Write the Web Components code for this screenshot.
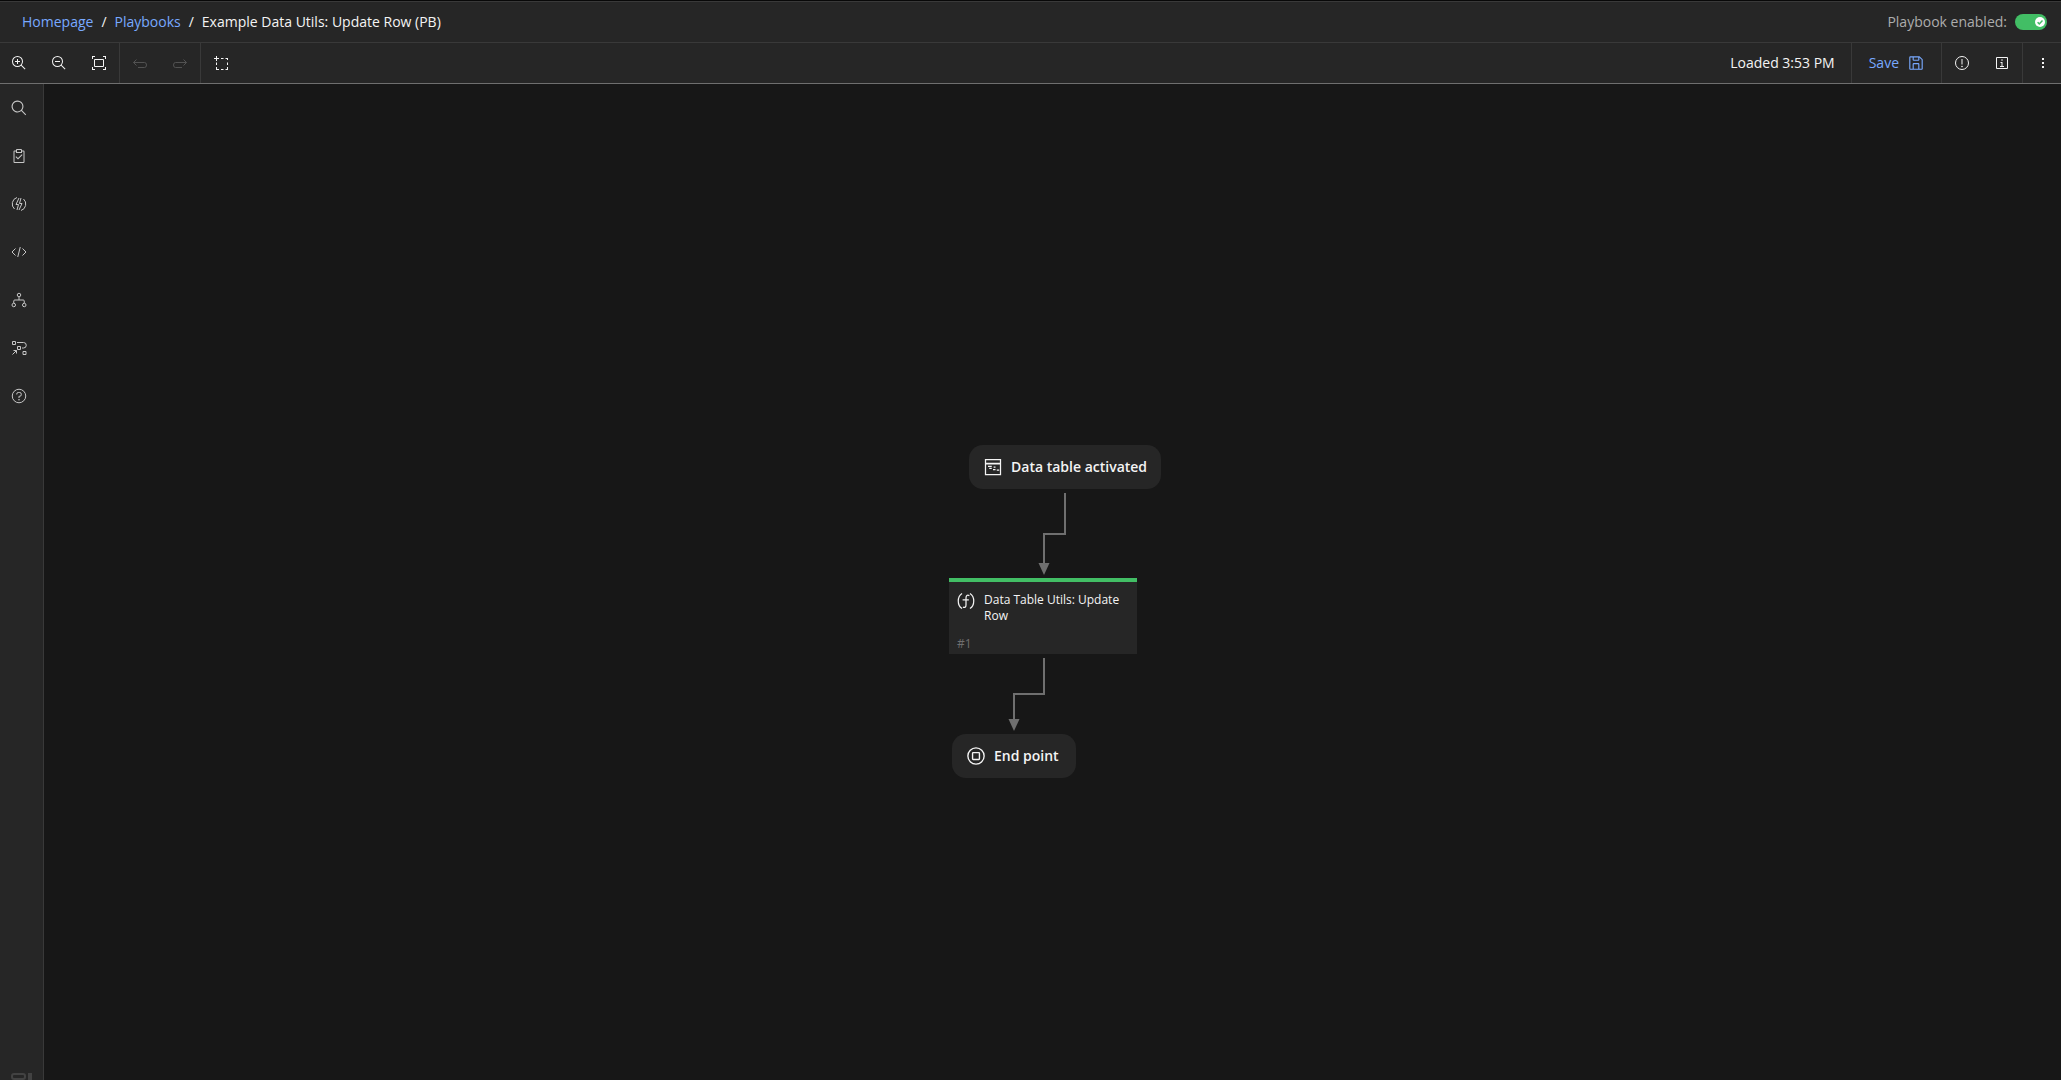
<!DOCTYPE html>
<html lang="en">
<head>
<meta charset="utf-8">
<title>Playbook designer</title>
<style>
html, body { margin: 0; height: 100%; }
body {
  --layer: #262626; --canvas: #171717; --line: #393939; --edge: #6f6f6f;
  --text: #f4f4f4; --muted: #adadad; --link: #78a9ff; --green: #42be65;
  background: #171717; color: var(--text);
  font: 14px/20px "Open Sans", "Noto Sans", sans-serif;
}
</style>
</head>
<body>
<script>
const ICONS = {
  zoomIn: '<path d="M18 12h-4V8h-2v4H8v2h4v4h2v-4h4z"/><path d="M21.4 20A10.9 10.9 0 0 0 24 13 11 11 0 1 0 13 24a10.9 10.9 0 0 0 7-2.6L27.6 29 29 27.6zM13 22a9 9 0 1 1 9-9 9 9 0 0 1-9 9z"/>',
  zoomOut: '<path d="M8 12h10v2H8z"/><path d="M21.4 20A10.9 10.9 0 0 0 24 13 11 11 0 1 0 13 24a10.9 10.9 0 0 0 7-2.6L27.6 29 29 27.6zM13 22a9 9 0 1 1 9-9 9 9 0 0 1-9 9z"/>',
  fit: '<path d="M8 2H2v6h2V4h4zM24 2h6v6h-2V4h-4zM8 30H2v-6h2v4h4zM24 30h6v-6h-2v4h-4zM24 24H8a2 2 0 0 1-2-2V10a2 2 0 0 1 2-2h16a2 2 0 0 1 2 2v12a2 2 0 0 1-2 2zM8 10v12h16V10z"/>',
  undo: '<path class="s" d="M9 9l-6 6 6 6M3 15h22q4 0 4 5t-4 5H12"/>',
  redo: '<path class="s" d="M23 9l6 6-6 6M29 15H7q-4 0-4 5t4 5h13"/>',
  select: '<path d="M0 6h10v2H0zM4 2h2v10H4zM14 6h5v2h-5zM23 6h5v4h-2V8h-3zM4 15h2v5H4zM4 24h2v4h4v2H4zM14 28h5v2h-5zM23 28h3v-4h2v6h-5zM26 15h2v5h-2z"/>',
  save: '<path d="M27.7 9.3l-5-5A1 1 0 0 0 22 4H6a2 2 0 0 0-2 2v20a2 2 0 0 0 2 2h20a2 2 0 0 0 2-2V10a1 1 0 0 0-.3-.7zM12 6h8v4h-8zm8 20h-8v-8h8zm2 0v-8a2 2 0 0 0-2-2h-8a2 2 0 0 0-2 2v8H6V6h4v4a2 2 0 0 0 2 2h8a2 2 0 0 0 2-2V6.4l4 4V26z"/>',
  warning: '<circle class="s" cx="16" cy="16" r="13"/><path d="M15 8h2v11h-2z"/><circle cx="16" cy="23" r="1.6"/>',
  info: '<path d="M26 28H6a2 2 0 0 1-2-2V6a2 2 0 0 1 2-2h20a2 2 0 0 1 2 2v20a2 2 0 0 1-2 2zM6 6v20h20V6z"/><path d="M17 22v-8h-4v2h2v6h-3v2h8v-2z"/><circle cx="16" cy="10" r="1.6"/>',
  more: '<path d="M14 6h4v4h-4zM14 14h4v4h-4zM14 22h4v4h-4z"/>',
  search: '<path d="M29 27.6l-7.6-7.6a11 11 0 1 0-1.4 1.4l7.6 7.6zM4 13a9 9 0 1 1 9 9 9 9 0 0 1-9-9z" transform="translate(-1 -1) scale(1.08)"/>',
  task: '<path d="M14 20.2l-3.6-3.6L9 18l5 5 9-9-1.4-1.4z"/><path d="M25 5h-3V4a2 2 0 0 0-2-2h-8a2 2 0 0 0-2 2v1H7a2 2 0 0 0-2 2v21a2 2 0 0 0 2 2h18a2 2 0 0 0 2-2V7a2 2 0 0 0-2-2zM12 4h8v4h-8zm13 24H7V7h3v3h12V7h3z"/>',
  bolt: '<path class="s" d="M12 3A13.500 13.500 0 0 0 7 26M20 29A13.500 13.500 0 0 0 25 6M16 4l-6 13h5l-3 11M20 4l-3 11h5l-6 13"/>',
  code: '<path class="s" d="M9 9l-7 7 7 7M23 9l7 7-7 7M18.500 6l-5 20"/>',
  tree: '<circle class="s" cx="16" cy="6" r="3.500"/><circle class="s" cx="5.500" cy="26" r="3.500"/><circle class="s" cx="26.500" cy="26" r="3.500"/><path class="s" d="M16 10v6M5.500 22v-4q0-2 2-2h17q2 0 2 2v4"/>',
  flow: '<path class="s" d="M3 3h6v6H3zM13 13h6v6h-6zM24 23h6v6h-6zM12 5h13a5 5 0 0 1 0 11h-3M3 29l8-8M5 21h6v6"/>',
  help: '<circle class="s" cx="16" cy="16" r="13.500"/><path class="s" d="M11.500 13v-1q0-3 3-3h3q3 0 3 3v1.500q0 3-3 3H16V20"/><circle cx="16" cy="23.500" r="1.600"/>',
  table: '<path d="M3 3h26v26H3zM5 5v4h22V5zM5 12v15h22V12z" fill-rule="evenodd"/><path d="M8 14h6v2H8zM10 17h4v2h-4zM17 15h3v2h-3zM16 19h4v2h-4zM22 20h4v2h-4z"/>',
  func: '<path class="s w" d="M9 2.500C0 8 0 24 9 29.500M23 2.500c9 5.500 9 21.500 0 27M22 6.500c-4-2-6 0-6 4V23c0 4-2 5-5.500 4M10 14h11"/>',
  end: '<circle class="s w" cx="16" cy="16" r="13"/><rect class="s w" x="10.500" y="10.500" width="11" height="11" rx="1"/>'
};

class PbIcon extends HTMLElement {
  connectedCallback() {
    this.attachShadow({ mode: 'open' }).innerHTML = `
      <style>
        :host { display: block; flex: none; width: var(--icon-size, 16px); height: var(--icon-size, 16px); }
        svg { display: block; width: 100%; height: 100%; fill: currentColor; }
        .s { fill: none; stroke: currentColor; stroke-width: 2; }
        .w { stroke-width: 2.2; }
      </style>
      <svg viewBox="0 0 32 32" aria-hidden="true">${ICONS[this.getAttribute('name')]}</svg>`;
  }
}

class PbIconButton extends HTMLElement {
  connectedCallback() {
    const off = this.hasAttribute('disabled') ? 'disabled' : '';
    this.attachShadow({ mode: 'open' }).innerHTML = `
      <style>
        :host { display: block; flex: none; width: 40px; height: 40px; }
        button { box-sizing: border-box; width: 100%; height: 100%; margin: 0; padding: 0; border: 0; background: none;
          color: inherit; display: flex; align-items: center; justify-content: center; cursor: pointer; }
        button:disabled { color: #525252; cursor: default; }
      </style>
      <button type="button" aria-label="${this.getAttribute('label')}" ${off}><pb-icon name="${this.getAttribute('icon')}"></pb-icon></button>`;
  }
}

class PbSwitch extends HTMLElement {
  connectedCallback() {
    this.attachShadow({ mode: 'open' }).innerHTML = `
      <style>
        :host { display: flex; align-items: center; gap: 8px; color: var(--muted); }
        .track { display: grid; width: 32px; height: 16px; }
        input, svg { grid-area: 1 / 1; margin: 0; }
        input { appearance: none; width: 32px; height: 16px; border-radius: 8px; background: var(--edge); cursor: pointer; }
        input:checked { background: var(--green); }
        svg { width: 10px; height: 10px; place-self: center end; margin-right: 2px; pointer-events: none; z-index: 1; }
      </style>
      <label for="toggle"><slot></slot></label>
      <span class="track">
        <input id="toggle" type="checkbox" role="switch" checked>
        <svg viewBox="0 0 10 10" aria-hidden="true"><circle cx="5" cy="5" r="5" fill="#fff"/><path d="M2.600 5.200l1.700 1.700 3.200-3.400" fill="none" stroke="#42be65" stroke-width="1.500"/></svg>
      </span>`;
  }
}

class PbHeader extends HTMLElement {
  connectedCallback() {
    this.attachShadow({ mode: 'open' }).innerHTML = `
      <style>
        :host { display: block; border-top: 1px solid #080808; }
        header { display: flex; align-items: center; justify-content: space-between; height: 40px; padding: 0 14px 0 22px;
          background: var(--layer); border-top: 1px solid var(--line); border-bottom: 1px solid var(--line); }
        nav { display: flex; gap: 8px; }
        a { color: var(--link); text-decoration: none; }
      </style>
      <header>
        <nav aria-label="Breadcrumb"><a href="#home">Homepage</a><span>/</span><a href="#playbooks">Playbooks</a><span>/</span><span>Example Data Utils: Update Row (PB)</span></nav>
        <pb-switch>Playbook enabled:</pb-switch>
      </header>`;
  }
}

class PbToolbar extends HTMLElement {
  connectedCallback() {
    this.attachShadow({ mode: 'open' }).innerHTML = `
      <style>
        :host { display: flex; height: 40px; background: var(--layer); border-bottom: 1px solid var(--edge); }
        .group { display: flex; align-items: center; }
        .group + .group { border-left: 1px solid var(--line); }
        .first { width: 119px; justify-content: flex-end; }
        .area pb-icon-button { width: 42px; }
        .spacer { flex: 1; }
        .status { padding: 0 16px; }
        .save { display: flex; align-items: center; gap: 8px; height: 40px; padding: 0 16px 0 17px; border: 0; background: none;
          color: var(--link); font: inherit; cursor: pointer; --icon-size: 18px; }
        .last { width: 38px; justify-content: flex-start; }
      </style>
      <div class="group first">
        <pb-icon-button icon="zoomIn" label="Zoom in"></pb-icon-button>
        <pb-icon-button icon="zoomOut" label="Zoom out"></pb-icon-button>
        <pb-icon-button icon="fit" label="Zoom to fit"></pb-icon-button>
      </div>
      <div class="group">
        <pb-icon-button icon="undo" label="Undo" disabled></pb-icon-button>
        <pb-icon-button icon="redo" label="Redo" disabled></pb-icon-button>
      </div>
      <div class="group area"><pb-icon-button icon="select" label="Select area"></pb-icon-button></div>
      <div class="spacer"></div>
      <div class="group status">Loaded 3:53 PM</div>
      <div class="group"><button class="save" type="button">Save<pb-icon name="save"></pb-icon></button></div>
      <div class="group">
        <pb-icon-button icon="warning" label="Issues"></pb-icon-button>
        <pb-icon-button icon="info" label="Details"></pb-icon-button>
      </div>
      <div class="group last"><pb-icon-button icon="more" label="More options"></pb-icon-button></div>`;
  }
}

class PbSidebar extends HTMLElement {
  connectedCallback() {
    const items = [['search', 'Search'], ['task', 'Tasks'], ['bolt', 'Functions'], ['code', 'Scripts'],
      ['tree', 'Sub-playbooks'], ['flow', 'Decision points'], ['help', 'Help']];
    this.attachShadow({ mode: 'open' }).innerHTML = `
      <style>
        :host { display: flex; flex-direction: column; justify-content: space-between; box-sizing: border-box; width: 44px;
          min-height: 0; background: var(--layer); border-right: 1px solid var(--line); color: #c6c6c6; }
        nav { display: flex; flex-direction: column; gap: 8px; padding: 4px 5px 0 0; }
        nav pb-icon-button { width: 38px; }
        .foot { display: flex; gap: 2px; height: 7px; padding-left: 11px; overflow: hidden; color: #424242; }
        .foot i { width: 4px; background: currentColor; }
      </style>
      <nav aria-label="Elements">${items.map(([i, l]) => `<pb-icon-button icon="${i}" label="${l}"></pb-icon-button>`).join('')}</nav>
      <div class="foot"><svg width="15" height="16" viewBox="0 0 15 16" aria-hidden="true"><rect x="1" y="1" width="13" height="5" rx="2" fill="none" stroke="currentColor" stroke-width="2"/></svg><i></i></div>`;
  }
}

class PbPoint extends HTMLElement {
  connectedCallback() {
    this.attachShadow({ mode: 'open' }).innerHTML = `
      <style>
        :host { display: flex; align-items: center; gap: 8px; box-sizing: border-box; height: 44px; min-width: 124px;
          padding: 0 14px; border-radius: 14px; background: var(--layer); font-weight: 600; white-space: nowrap; --icon-size: 20px; }
      </style>
      <pb-icon name="${this.getAttribute('icon')}"></pb-icon><span><slot></slot></span>`;
  }
}

class PbTask extends HTMLElement {
  connectedCallback() {
    this.attachShadow({ mode: 'open' }).innerHTML = `
      <style>
        :host { display: flex; flex-direction: column; justify-content: space-between; box-sizing: border-box; width: 188px; height: 76px;
          padding: 10px 8px 2px; border-top: 4px solid var(--green); background: var(--layer); font-size: 12px; line-height: 16px; --icon-size: 18px; }
        .row { display: flex; gap: 9px; }
        .num { color: var(--edge); }
      </style>
      <div class="row"><pb-icon name="func"></pb-icon><span><slot></slot></span></div>
      <span class="num">${this.getAttribute('number')}</span>`;
  }
}

class PbCanvas extends HTMLElement {
  connectedCallback() {
    this.attachShadow({ mode: 'open' }).innerHTML = `
      <style>
        :host { display: block; position: relative; overflow: hidden; min-width: 0; background: var(--canvas); }
        .edges { position: absolute; inset: 0; width: 100%; height: 100%; fill: none; stroke: var(--edge); stroke-width: 2; }
        .edges .tip { fill: var(--edge); stroke: none; }
        .start, .task, .end { position: absolute; }
        .start { left: 925px; top: 361px; }
        .task { left: 905px; top: 494px; }
        .end { left: 908px; top: 650px; }
      </style>
      <svg class="edges" aria-hidden="true">
        <path d="M1021 409V450H1000V480"/><path class="tip" d="M994.500 479h11L1000 491z"/>
        <path d="M1000 574V610H970V636"/><path class="tip" d="M964.500 635h11L970 647z"/>
      </svg>
      <pb-point class="start" icon="table">Data table activated</pb-point>
      <pb-task class="task" number="#1">Data Table Utils: Update Row</pb-task>
      <pb-point class="end" icon="end">End point</pb-point>`;
  }
}

class PbApp extends HTMLElement {
  connectedCallback() {
    this.attachShadow({ mode: 'open' }).innerHTML = `
      <style>
        :host { display: flex; flex-direction: column; height: 100vh; }
        main { display: flex; flex: 1; min-height: 0; }
        pb-canvas { flex: 1; }
      </style>
      <pb-header></pb-header>
      <pb-toolbar></pb-toolbar>
      <main><pb-sidebar></pb-sidebar><pb-canvas></pb-canvas></main>`;
  }
}

customElements.define('pb-icon', PbIcon);
customElements.define('pb-icon-button', PbIconButton);
customElements.define('pb-switch', PbSwitch);
customElements.define('pb-header', PbHeader);
customElements.define('pb-toolbar', PbToolbar);
customElements.define('pb-sidebar', PbSidebar);
customElements.define('pb-point', PbPoint);
customElements.define('pb-task', PbTask);
customElements.define('pb-canvas', PbCanvas);
customElements.define('pb-app', PbApp);
</script>
<pb-app></pb-app>
</body>
</html>
